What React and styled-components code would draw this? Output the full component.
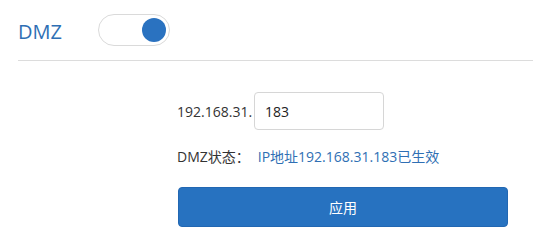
import React, { useState } from 'react';
import styled, { createGlobalStyle } from 'styled-components';

const GlobalStyle = createGlobalStyle`
  body {
    margin: 0;
    background: #fff;
    font-family: "Open Sans", "Noto Sans CJK SC", sans-serif;
  }
`;

const Page = styled.div`
  width: 533px;
  height: 247px;
  overflow: hidden;
`;

const Header = styled.div`
  display: flex;
  align-items: center;
  height: 60px;
  margin-left: 18px;
  border-bottom: 1px solid #dcdcdc;
`;

const Title = styled.span`
  font-size: 20px;
  color: #2f6fb4;
  width: 80px;
  margin-top: 2px;
`;

const Toggle = styled.button`
  position: relative;
  width: 72px;
  height: 32px;
  padding: 0;
  border: 1px solid #dadada;
  border-radius: 16px;
  background: #fff;
  cursor: pointer;
  margin-top: -1px;

  &::after {
    content: '';
    position: absolute;
    top: 3px;
    left: ${p => (p.$on ? '43px' : '3px')};
    width: 24px;
    height: 24px;
    border-radius: 50%;
    background: #2a72c0;
  }
`;

const Content = styled.div`
  display: flex;
  flex-direction: column;
  margin-left: 177px;
  padding-top: 31px;
`;

const IpRow = styled.div`
  display: flex;
  align-items: center;
  font-size: 14px;
  color: #333;
`;

const IpInput = styled.input`
  width: 130px;
  height: 38px;
  box-sizing: border-box;
  margin-left: 2px;
  padding: 0 10px;
  border: 1px solid #d6d6d6;
  border-radius: 4px;
  font-family: "Open Sans", sans-serif;
  font-size: 14px;
  color: #222;
  outline: none;
`;

const StatusRow = styled.div`
  margin-top: 17px;
  font-size: 14px;
  line-height: 20px;
  color: #333;
`;

const StatusValue = styled.span`
  color: #2f6fb4;
  margin-left: 8px;
`;

const ApplyButton = styled.button`
  margin: 20px 0 0 1px;
  width: 330px;
  height: 40px;
  border: 1px solid #2267b2;
  border-radius: 4px;
  background: #2772c0;
  color: #fff;
  font-family: "Noto Sans CJK SC", sans-serif;
  font-size: 14px;
  cursor: pointer;
`;

export default function App() {
  const [on, setOn] = useState(true);
  const [host, setHost] = useState('183');

  return (
    <Page>
      <GlobalStyle />
      <Header>
        <Title>DMZ</Title>
        <Toggle $on={on} onClick={() => setOn(v => !v)} aria-label="DMZ" />
      </Header>
      <Content>
        <IpRow>
          192.168.31.
          <IpInput value={host} onChange={e => setHost(e.target.value)} />
        </IpRow>
        <StatusRow>
          DMZ状态：<StatusValue>IP地址192.168.31.183已生效</StatusValue>
        </StatusRow>
        <ApplyButton>应用</ApplyButton>
      </Content>
    </Page>
  );
}
